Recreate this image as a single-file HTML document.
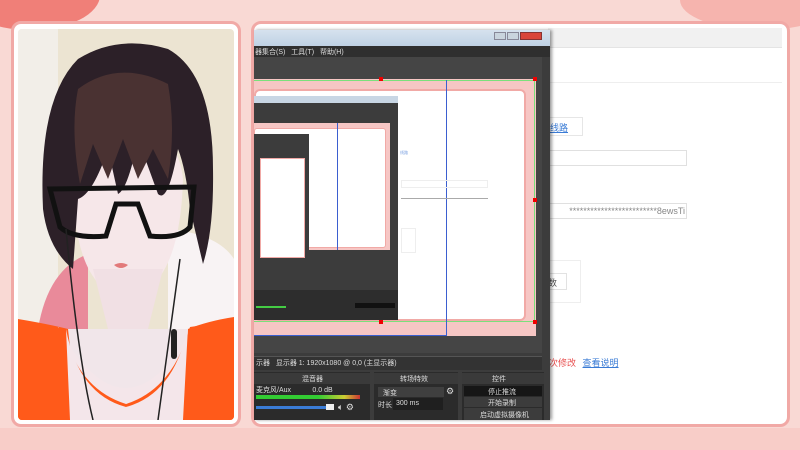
<!DOCTYPE html>
<html><head><meta charset="utf-8"><style>
*{margin:0;padding:0;box-sizing:border-box}
body{width:800px;height:450px;overflow:hidden;background:#f9d9d4;font-family:"Liberation Sans","Noto Sans CJK SC",sans-serif;position:relative}
.a{position:absolute}
.t{font-size:7px;color:#ddd;white-space:nowrap}
</style></head><body>
<div class="a" style="left:-40px;top:-40px;width:140px;height:70px;border-radius:50%;background:#f07f78"></div>
<div class="a" style="left:680px;top:-30px;width:160px;height:60px;border-radius:50%;background:#f6b4ae"></div>
<div class="a" style="left:0;top:428px;width:800px;height:22px;background:#f8cdc8"></div>
<!-- left frame -->
<div class="a" style="left:11px;top:21px;width:230px;height:406px;border:3px solid #f1a9a6;border-radius:10px;background:#fff"></div>
<div class="a" style="left:18px;top:29px;width:216px;height:391px;overflow:hidden;border-radius:4px">
<svg width="216" height="391" viewBox="0 0 216 391">
<rect width="216" height="391" fill="#ece4d2"/>
<rect x="0" y="0" width="40" height="391" fill="#f2eee8"/>
<path d="M150 200 Q200 205 216 230 L216 330 L150 330Z" fill="#f8f3f4"/>
<path d="M20 300 Q30 240 70 225 L70 300Z" fill="#e98a9a"/>
<path d="M0 300 L216 300 L216 391 L0 391Z" fill="#f1e6ea"/>
<path d="M0 290 Q30 295 50 300 L60 391 L0 391Z M216 288 Q190 292 170 300 L165 391 L216 391Z" fill="#ff5a1a"/>
<path d="M40 298 Q108 420 175 298 L180 391 L35 391Z" fill="#f4e6ea"/>
<path d="M50 305 Q108 380 168 305" stroke="#ff5a1a" stroke-width="0" fill="none"/>
<path d="M0 391 L0 300 Q30 296 45 300 Q60 360 108 375 Q155 360 172 298 Q195 295 216 290 L216 391Z" fill="#ff5a1a"/>
<path d="M48 300 Q60 365 108 378 Q156 365 170 298 L165 391 L52 391Z" fill="#f4e6ea"/>
<path d="M55 150 Q55 260 108 270 Q162 260 165 150 Q160 100 108 95 Q60 100 55 150Z" fill="#f6e7e9"/>
<path d="M75 240 L90 300 L130 300 L145 240Z" fill="#f1e0e4"/>
<path d="M25 180 Q20 70 60 30 Q100 5 150 20 Q195 45 195 140 Q196 200 185 235 L172 180 Q168 140 160 120 Q150 175 140 165 L120 110 Q110 160 100 165 L90 120 Q75 165 60 170 L55 240 Q30 220 25 180Z" fill="#2c2028"/>
<path d="M60 60 Q100 30 150 55 Q158 100 150 150 L135 120 L120 150 L105 110 L90 150 L75 115 L62 155 Q52 100 60 60Z" fill="#4a3232"/>
<path d="M32 160 L176 158 L172 198 Q162 210 132 207 L120 175 L98 175 L88 207 Q55 210 42 198Z" fill="none" stroke="#111" stroke-width="5"/>
<path d="M96 236 Q103 232 110 236 Q103 242 96 236Z" fill="#e27a7a"/>
<path d="M48 200 Q60 330 75 391 M162 230 Q150 320 140 391" stroke="#222" stroke-width="1.5" fill="none"/>
<rect x="153" y="300" width="6" height="30" rx="3" fill="#222"/>
</svg></div>
<!-- right frame -->
<div class="a" style="left:251px;top:21px;width:539px;height:406px;border:3px solid #f1a9a6;border-radius:10px;background:#fff"></div>
<div class="a" style="left:258px;top:28px;width:524px;height:392px;background:#fff"></div>
<div class="a" style="left:548px;top:28px;width:234px;height:20px;background:#f1f1f1;border-bottom:1px solid #e4e4e4"></div>
<div class="a" style="left:548px;top:82px;width:234px;height:1px;background:#eee"></div>
<div class="a" style="left:545px;top:117px;width:38px;height:19px;border:1px solid #e6e6e6;font-size:9px;color:#3a7bd5;padding:3px 4px;text-decoration:underline">线路</div>
<div class="a" style="left:545px;top:150px;width:142px;height:16px;border:1px solid #e0e0e0"></div>
<div class="a" style="left:545px;top:203px;width:142px;height:16px;border:1px solid #e0e0e0;font-size:9px;color:#888;text-align:right;padding:2px 1px;overflow:hidden;white-space:nowrap">*************************8ewsTi</div>
<div class="a" style="left:545px;top:260px;width:36px;height:43px;border:1px solid #eee"></div>
<div class="a" style="left:545px;top:273px;width:22px;height:17px;border:1px solid #e2e2e2;font-size:9px;color:#555;padding:2px 2px">数</div>
<div class="a" style="left:549px;top:356px;font-size:9px;color:#e85050">次修改 <span style="color:#3a7bd5;text-decoration:underline;margin-left:4px">查看说明</span></div>
<!-- OBS window -->
<div class="a" style="left:254px;top:30px;width:296px;height:390px;background:#3c3c3c;box-shadow:2px 0 3px rgba(0,0,0,.4)"></div>
<div class="a" style="left:254px;top:30px;width:296px;height:16px;background:linear-gradient(#d6e2ee,#bfd1e4)"></div>
<div class="a" style="left:494px;top:32px;width:12px;height:8px;background:#c9d4de;border:1px solid #889"></div>
<div class="a" style="left:507px;top:32px;width:12px;height:8px;background:#c9d4de;border:1px solid #889"></div>
<div class="a" style="left:520px;top:32px;width:22px;height:8px;background:#d9453a;border:1px solid #833"></div>
<div class="a" style="left:254px;top:46px;width:296px;height:11px;background:#2f2f2f"></div>
<div class="a t" style="left:255px;top:47px;font-size:7px;color:#ddd">器集合(S) &nbsp; 工具(T) &nbsp; 帮助(H)</div>
<div class="a" style="left:254px;top:57px;width:288px;height:296px;background:#454545"></div>
<!-- canvas -->
<div class="a" style="left:254px;top:79px;width:282px;height:257px;background:#f6c6c4"></div>
<div class="a" style="left:254px;top:89px;width:272px;height:232px;background:#fff;border:2px solid #f1a9a6;border-radius:6px"></div>
<div class="a" style="left:254px;top:80px;width:281px;height:242px;border:1.5px solid #7be07b;border-left:none"></div>
<div class="a" style="left:446px;top:80px;width:1px;height:256px;background:#3b5fd0"></div>
<div class="a" style="left:254px;top:335px;width:193px;height:1px;background:#3b5fd0"></div>
<div class="a" style="left:379px;top:77px;width:4px;height:4px;background:#e00"></div>
<div class="a" style="left:533px;top:77px;width:4px;height:4px;background:#e00"></div>
<div class="a" style="left:533px;top:198px;width:4px;height:4px;background:#e00"></div>
<div class="a" style="left:533px;top:320px;width:4px;height:4px;background:#e00"></div>
<div class="a" style="left:379px;top:320px;width:4px;height:4px;background:#e00"></div>
<!-- nested window -->
<div class="a" style="left:254px;top:96px;width:144px;height:224px;background:#3c3c3c"></div>
<div class="a" style="left:254px;top:96px;width:144px;height:7px;background:#c8d6e4"></div>
<div class="a" style="left:254px;top:123px;width:136px;height:127px;background:#f6c6c4"></div>
<div class="a" style="left:254px;top:128px;width:132px;height:120px;background:#fff;border:1px solid #f1a9a6;border-radius:3px"></div>
<div class="a" style="left:254px;top:134px;width:55px;height:130px;background:#3c3c3c"></div>
<div class="a" style="left:260px;top:158px;width:45px;height:100px;background:#fff;border:1px solid #f1a9a6"></div>
<div class="a" style="left:337px;top:123px;width:1px;height:127px;background:#3b5fd0"></div>
<div class="a" style="left:254px;top:290px;width:144px;height:30px;background:#2d2d2d"></div>
<div class="a" style="left:355px;top:303px;width:40px;height:5px;background:#111"></div>
<div class="a" style="left:256px;top:306px;width:30px;height:2px;background:#4c4"></div>
<div class="a" style="left:400px;top:150px;width:12px;height:4px;font-size:4px;color:#7aa0e0">线路</div>
<div class="a" style="left:401px;top:180px;width:87px;height:8px;border:1px solid #eee"></div>
<div class="a" style="left:401px;top:198px;width:87px;height:1px;background:#aaa"></div>
<div class="a" style="left:401px;top:228px;width:15px;height:25px;border:1px solid #eee"></div>
<!-- status -->
<div class="a" style="left:254px;top:356px;width:288px;height:14px;background:#333;border-top:1px solid #555"></div>
<div class="a t" style="left:256px;top:358px">示器 &nbsp; 显示器 1: 1920x1080 @ 0,0 (主显示器)</div>
<div class="a" style="left:254px;top:372px;width:116px;height:48px;background:#2b2b2b"></div>
<div class="a" style="left:254px;top:373px;width:116px;height:11px;background:#3a3a3a"></div>
<div class="a t" style="left:302px;top:374px">混音器</div>
<div class="a t" style="left:256px;top:385px">麦克风/Aux &nbsp; &nbsp; &nbsp; &nbsp; &nbsp; 0.0 dB</div>
<div class="a" style="left:256px;top:395px;width:104px;height:4px;background:linear-gradient(90deg,#3c3 60%,#cc3 85%,#c33)"></div>
<div class="a" style="left:256px;top:406px;width:76px;height:3px;background:#3a7bd5"></div>
<div class="a" style="left:326px;top:404px;width:8px;height:6px;background:#eee"></div>
<div class="a t" style="left:338px;top:402px;font-size:9px">🔈︎ ⚙</div>
<div class="a" style="left:374px;top:372px;width:84px;height:48px;background:#2b2b2b"></div>
<div class="a" style="left:374px;top:373px;width:84px;height:11px;background:#3a3a3a"></div>
<div class="a t" style="left:400px;top:374px">转场特效</div>
<div class="a" style="left:378px;top:387px;width:66px;height:10px;background:#3f3f3f"></div>
<div class="a t" style="left:383px;top:388px">渐变</div>
<div class="a t" style="left:446px;top:386px;font-size:9px">⚙</div>
<div class="a t" style="left:378px;top:400px">时长</div>
<div class="a" style="left:393px;top:398px;width:50px;height:12px;background:#1f1f1f"></div>
<div class="a t" style="left:396px;top:400px">300 ms</div>
<div class="a" style="left:462px;top:372px;width:82px;height:48px;background:#2b2b2b"></div>
<div class="a" style="left:462px;top:373px;width:82px;height:11px;background:#3a3a3a"></div>
<div class="a t" style="left:492px;top:374px">控件</div>
<div class="a" style="left:464px;top:386px;width:78px;height:10px;background:#161616"></div>
<div class="a t" style="left:488px;top:387px">停止推流</div>
<div class="a" style="left:464px;top:397px;width:78px;height:10px;background:#3c3c3c"></div>
<div class="a t" style="left:488px;top:398px">开始录制</div>
<div class="a" style="left:464px;top:408px;width:78px;height:12px;background:#3c3c3c"></div>
<div class="a t" style="left:480px;top:410px">启动虚拟摄像机</div>
</body></html>
